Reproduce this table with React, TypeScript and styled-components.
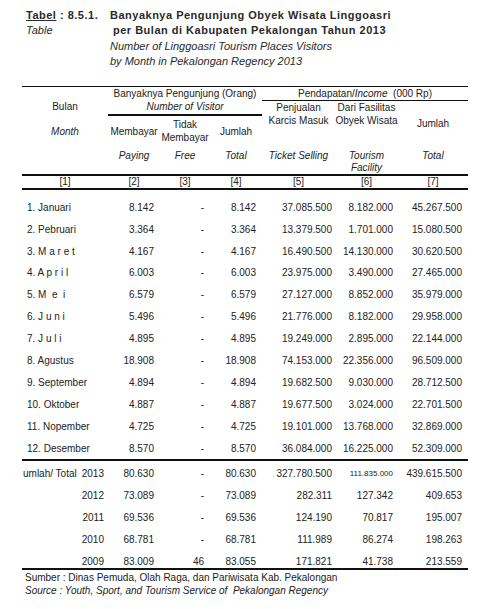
import React from "react";
import styled, { createGlobalStyle } from "styled-components";

const GlobalStyle = createGlobalStyle`
  html, body { margin: 0; padding: 0; background: #fff; }
  body {
    font-family: "Liberation Sans", Arial, sans-serif;
    color: #222;
    font-size: 10px;
  }
`;

const COLS = "86px 52px 50px 52px 73px 63px 70px";
const PAD = [5, 6, 6, 6, 3, 5, 6];

const Page = styled.div`
  width: 495px;
  padding-top: 8px;
`;

const TitleBlock = styled.div`
  display: grid;
  grid-template-columns: 84px 1fr;
  padding-left: 26px;
  line-height: 15.3px;
  font-size: 11px;
`;

const TitleCell = styled.div<{ $bold?: boolean; $italic?: boolean; $indent?: number }>`
  font-weight: ${(p) => (p.$bold ? 700 : 400)};
  font-style: ${(p) => (p.$italic ? "italic" : "normal")};
  letter-spacing: ${(p) => (p.$bold ? "0.5px" : "0")};
  padding-left: ${(p) => p.$indent ?? 0}px;
  white-space: nowrap;
  color: #2a2a2a;
`;

const Under = styled.span`
  text-decoration: underline;
`;

const TableWrap = styled.div`
  margin: 16.8px 0 0 22px;
  width: 446px;
`;

const Header = styled.div`
  display: grid;
  grid-template-columns: ${COLS};
  grid-template-rows: 14px 15px 33px 25px;
  border-top: 1px solid #111;
  border-bottom: 2px solid #111;
`;

const HCell = styled.div<{
  $col: string;
  $row: string;
  $pt?: number;
  $lh?: number;
  $italic?: boolean;
  $line?: number;
}>`
  grid-column: ${(p) => p.$col};
  grid-row: ${(p) => p.$row};
  padding-top: ${(p) => p.$pt ?? 0}px;
  line-height: ${(p) => p.$lh ?? 14}px;
  font-style: ${(p) => (p.$italic ? "italic" : "normal")};
  text-align: center;
  white-space: pre;
  border-bottom: ${(p) => (p.$line ? `${p.$line}px solid #111` : "none")};
  box-sizing: border-box;
`;

const Gap = styled.div<{ $h: number }>`
  height: ${(p) => p.$h}px;
`;

const IndexRow = styled.div`
  display: grid;
  grid-template-columns: ${COLS};
  height: 12px;
  line-height: 11px;
  border-bottom: 2px solid #111;
  text-align: center;
`;

const Section = styled.div<{ $pt: number; $line?: boolean }>`
  padding-top: ${(p) => p.$pt}px;
  border-bottom: ${(p) => (p.$line ? "2px solid #111" : "none")};
`;

const Row = styled.div<{ $h?: number }>`
  display: grid;
  grid-template-columns: ${COLS};
  height: ${(p) => p.$h ?? 21.9}px;
  line-height: 21.9px;
`;

const Cell = styled.div<{ $pad: number; $left?: boolean; $size?: number }>`
  text-align: ${(p) => (p.$left ? "left" : "right")};
  padding-${(p) => (p.$left ? "left" : "right")}: ${(p) => p.$pad}px;
  font-size: ${(p) => p.$size ?? 10}px;
  white-space: pre;
`;

const TotalLabel = styled.div`
  display: flex;
  justify-content: space-between;
  padding: 0 4px 0 1px;
  white-space: nowrap;
`;

const Footer = styled.div`
  border-top: 2px solid #111;
  padding: 1px 0 0 3px;
  line-height: 13.4px;
`;

const FootLine = styled.div<{ $italic?: boolean }>`
  font-style: ${(p) => (p.$italic ? "italic" : "normal")};
  white-space: pre;
`;

const months: string[][] = [
  ["1. Januari", "8.142", "-", "8.142", "37.085.500", "8.182.000", "45.267.500"],
  ["2. Pebruari", "3.364", "-", "3.364", "13.379.500", "1.701.000", "15.080.500"],
  ["3. M a r e t", "4.167", "-", "4.167", "16.490.500", "14.130.000", "30.620.500"],
  ["4. A p r i l", "6.003", "-", "6.003", "23.975.000", "3.490.000", "27.465.000"],
  ["5. M  e  i", "6.579", "-", "6.579", "27.127.000", "8.852.000", "35.979.000"],
  ["6. J u n i", "5.496", "-", "5.496", "21.776.000", "8.182.000", "29.958.000"],
  ["7. J u l i", "4.895", "-", "4.895", "19.249.000", "2.895.000", "22.144.000"],
  ["8. Agustus", "18.908", "-", "18.908", "74.153.000", "22.356.000", "96.509.000"],
  ["9. September", "4.894", "-", "4.894", "19.682.500", "9.030.000", "28.712.500"],
  ["10. Oktober", "4.887", "-", "4.887", "19.677.500", "3.024.000", "22.701.500"],
  ["11. Nopember", "4.725", "-", "4.725", "19.101.000", "13.768.000", "32.869.000"],
  ["12. Desember", "8.570", "-", "8.570", "36.084.000", "16.225.000", "52.309.000"],
];

const totals: string[][] = [
  ["2013", "80.630", "-", "80.630", "327.780.500", "111.835.000", "439.615.500"],
  ["2012", "73.089", "-", "73.089", "282.311", "127.342", "409.653"],
  ["2011", "69.536", "-", "69.536", "124.190", "70.817", "195.007"],
  ["2010", "68.781", "-", "68.781", "111.989", "86.274", "198.263"],
  ["2009", "83.009", "46", "83.055", "171.821", "41.738", "213.559"],
];

export default function App() {
  return (
    <>
      <GlobalStyle />
      <Page>
        <TitleBlock>
          <TitleCell $bold>
            <Under>Tabel</Under> : 8.5.1.
          </TitleCell>
          <TitleCell $bold>Banyaknya Pengunjung Obyek Wisata Linggoasri</TitleCell>
          <TitleCell $italic>Table</TitleCell>
          <TitleCell $bold $indent={3}>per Bulan di Kabupaten Pekalongan Tahun 2013</TitleCell>
          <div />
          <TitleCell $italic>Number of Linggoasri Tourism Places Visitors</TitleCell>
          <div />
          <TitleCell $italic>by Month in Pekalongan Regency 2013</TitleCell>
        </TitleBlock>

        <TableWrap>
          <Header>
            <HCell $col="1" $row="1 / 5" $pt={13.5}>
              Bulan
              <Gap $h={10.5} />
              <i>Month</i>
            </HCell>
            <HCell $col="2 / 5" $row="1 / 3" $lh={13.5} $line={2}>
              Banyaknya Pengunjung (Orang)
              <br />
              <i>Number of Visitor</i>
            </HCell>
            <HCell $col="5 / 8" $row="1" $lh={13} $line={1}>
              Pendapatan/<i>Income</i>{"  "}(000 Rp)
            </HCell>
            <HCell $col="2" $row="3" $pt={8.7}>Membayar</HCell>
            <HCell $col="3" $row="3" $pt={2.5} $lh={13}>
              Tidak
              <br />
              Membayar
            </HCell>
            <HCell $col="4" $row="3" $pt={9}>Jumlah</HCell>
            <HCell $col="5" $row="2 / 4" $lh={13.3}>
              Penjualan
              <br />
              Karcis Masuk
            </HCell>
            <HCell $col="6" $row="2 / 4" $lh={13.3}>
              Dari Fasilitas
              <br />
              Obyek Wisata
            </HCell>
            <HCell $col="7" $row="2 / 4" $pt={16}>Jumlah</HCell>
            <HCell $col="2" $row="4" $pt={1} $lh={12} $italic>Paying</HCell>
            <HCell $col="3" $row="4" $pt={1} $lh={12} $italic>Free</HCell>
            <HCell $col="4" $row="4" $pt={1} $lh={12} $italic>Total</HCell>
            <HCell $col="5" $row="4" $pt={1} $lh={12} $italic>Ticket Selling</HCell>
            <HCell $col="6" $row="4" $pt={1} $lh={12} $italic>
              Tourism
              <br />
              Facility
            </HCell>
            <HCell $col="7" $row="4" $pt={1} $lh={12} $italic>Total</HCell>
          </Header>

          <IndexRow>
            {[1, 2, 3, 4, 5, 6, 7].map((n) => (
              <div key={n}>[{n}]</div>
            ))}
          </IndexRow>

          <Section $pt={6.8} $line>
            {months.map((r) => (
              <Row key={r[0]}>
                {r.map((v, i) => (
                  <Cell key={i} $pad={PAD[i]} $left={i === 0}>
                    {v}
                  </Cell>
                ))}
              </Row>
            ))}
          </Section>

          <Section $pt={1.5}>
            {totals.map((r, idx) => (
              <Row key={r[0]} $h={idx === totals.length - 1 ? 17 : 21.9}>
                <TotalLabel>
                  <span>{idx === 0 ? "umlah/ Total" : ""}</span>
                  <span>{r[0]}</span>
                </TotalLabel>
                {r.slice(1).map((v, i) => (
                  <Cell key={i} $pad={PAD[i + 1]} $size={idx === 0 && i === 4 ? 8 : 10}>
                    {v}
                  </Cell>
                ))}
              </Row>
            ))}
          </Section>

          <Footer>
            <FootLine>Sumber : Dinas Pemuda, Olah Raga, dan Pariwisata Kab. Pekalongan</FootLine>
            <FootLine $italic>Source : Youth, Sport, and Tourism Service of  Pekalongan Regency</FootLine>
          </Footer>
        </TableWrap>
      </Page>
    </>
  );
}
